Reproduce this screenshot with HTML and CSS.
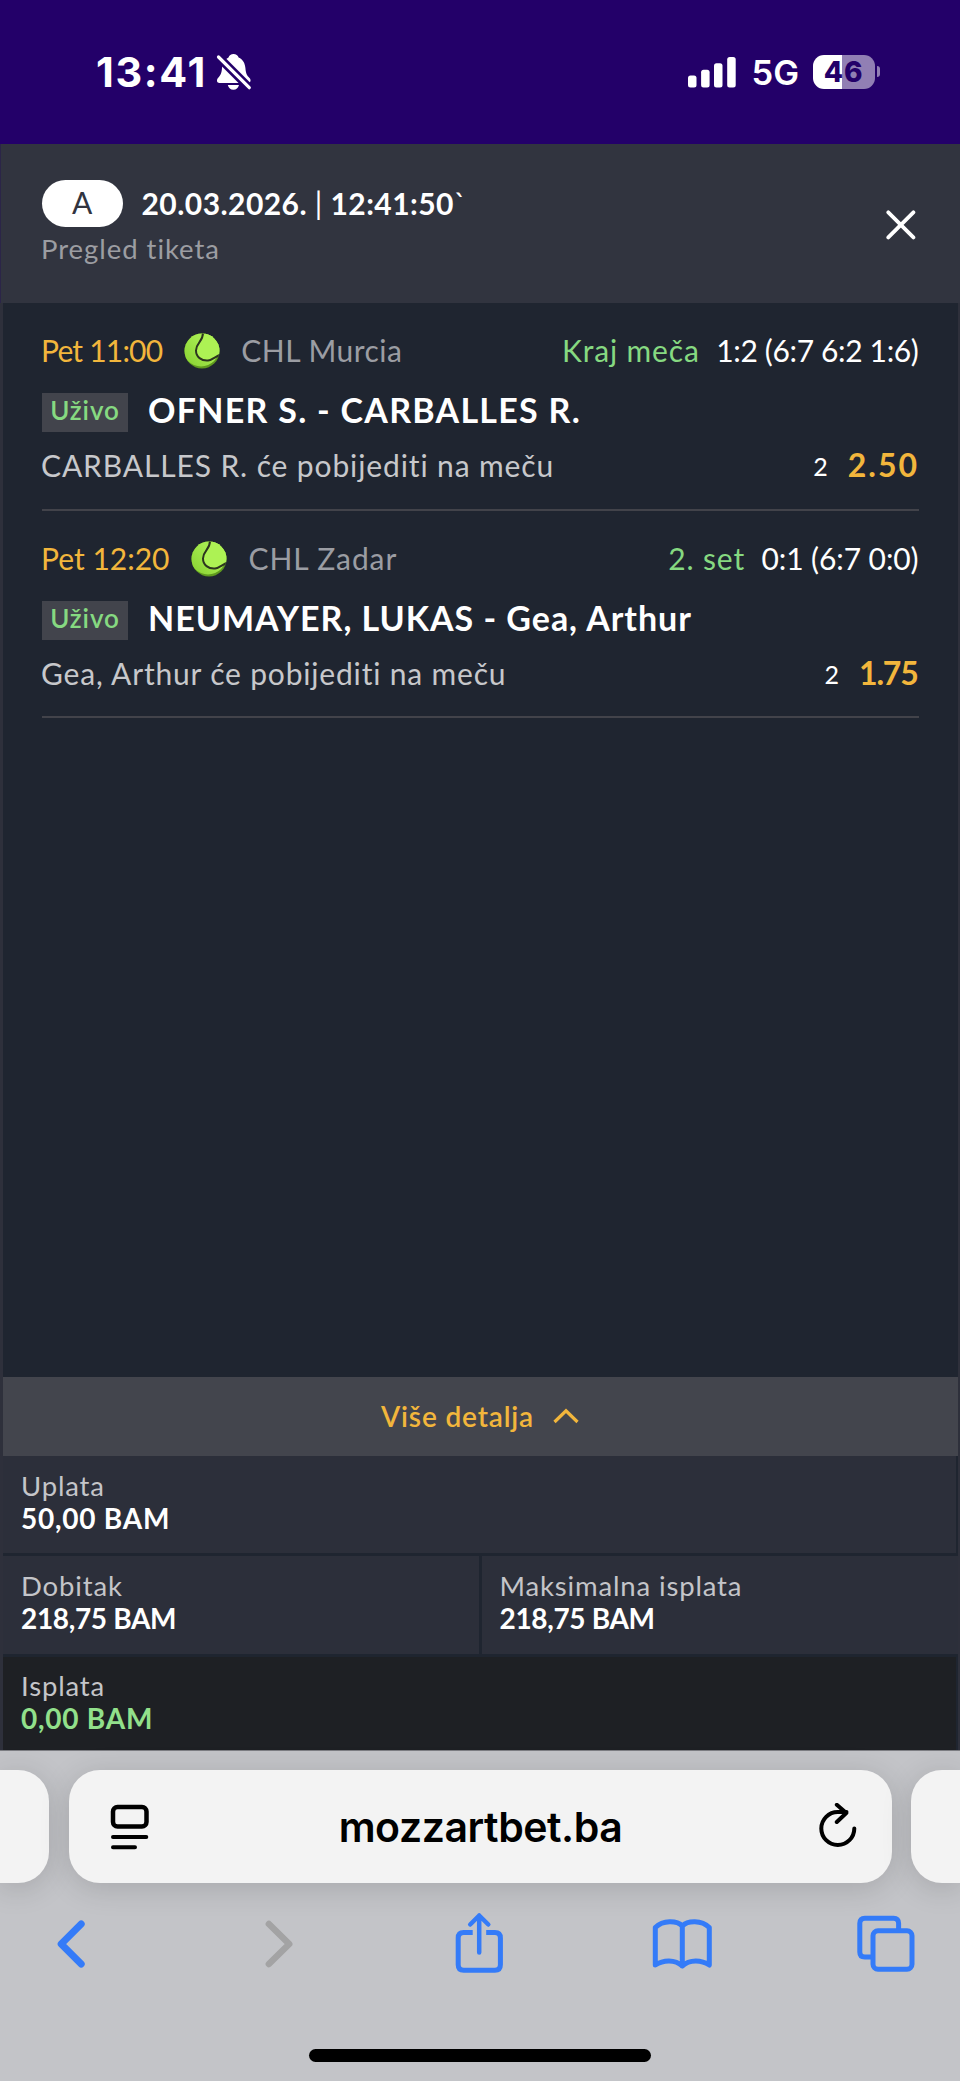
FILE: index.html
```html
<!DOCTYPE html>
<html lang="bs">
<head>
<meta charset="utf-8">
<title>Pregled tiketa</title>
<link rel="stylesheet" href="styles.css">
</head>
<body>
<div class="phone">
  <div class="status">
    <div class="status-left">
      <span class="clock">13:41</span>
      <svg class="bell" width="36" height="38" viewBox="0 0 36 38">
        <path fill="#fff" d="M17.5 1C20 1 22 2.400 22.600 4.400 27 6.500 29 10 29.400 15 29.800 20.500 31 22.500 33.500 25 35.500 27.200 34.500 30 32 30H3.500C.8 30 .2 27 2 25 4.500 22.300 5.600 20.500 6 15 6.400 10 8.500 6.500 12.500 4.400 13.200 2.400 15 1 17.500 1ZM11.800 32H23C22.200 35.200 20.200 36.800 17.400 36.800 14.600 36.800 12.600 35.200 11.800 32Z"/>
        <path stroke="#230069" stroke-width="8.500" d="M-1 .5 36 37.500"/>
        <path stroke="#fff" stroke-width="3.200" stroke-linecap="round" d="M2.500 4 33.300 34.700"/>
      </svg>
    </div>
    <div class="status-right">
      <svg width="48" height="31" viewBox="0 0 48 31" fill="#fff">
        <rect x="0" y="18.500" width="8.500" height="12" rx="2.500"/>
        <rect x="13.100" y="12.700" width="8.500" height="17.800" rx="2.500"/>
        <rect x="26" y="6.300" width="8.500" height="24.200" rx="2.500"/>
        <rect x="39.200" y="0" width="8.500" height="30.500" rx="2.500"/>
      </svg>
      <span class="network">5G</span>
      <span class="battery">46</span>
      <span class="battery-tip"></span>
    </div>
  </div>

  <header class="head">
    <div>
      <div class="head-row">
        <span class="pill">A</span>
        <span class="stamp">20.03.2026. <span class="bar">|</span> 12:41:50<span class="bar">`</span></span>
      </div>
      <div class="subtitle">Pregled tiketa</div>
    </div>
    <svg class="close" width="30" height="30" viewBox="0 0 30 30" fill="none" stroke="#fff" stroke-width="3.800" stroke-linecap="round"><path d="M2.300 2.300 27.400 27.400M27.400 2.300 2.300 27.400"/></svg>
  </header>

  <main class="frame">
    <section class="list">
      <article class="bet">
        <div class="meta">
          <span class="time time-tight">Pet 11:00</span>
          <svg class="ball" width="36" height="36" viewBox="0 0 36 36">
            <defs>
              <linearGradient id="felt" x1="0" y1="1" x2="1" y2="0"><stop offset="0" stop-color="#86cf2f"/><stop offset=".6" stop-color="#a6ec50"/></linearGradient>
              <clipPath id="disc"><circle cx="18" cy="18" r="17.500"/></clipPath>
            </defs>
            <g clip-path="url(#disc)">
              <rect width="36" height="36" fill="#5f9a1e"/>
              <circle cx="17" cy="15" r="18.500" fill="url(#felt)"/>
              <path d="M19 0C19 9 12 9.500 12 17.500 12 24 17.500 28 24 27.500 29 27 32 23 37 21.500V0Z" fill="#adf254" stroke="#2c351f" stroke-width="2"/>
            </g>
          </svg>
          <span class="league">CHL Murcia</span>
          <span class="phase">Kraj meča</span>
          <span class="score">1:2 (6:7 6:2 1:6)</span>
        </div>
        <div class="match"><span class="live">Uživo</span><span class="teams">OFNER S. - CARBALLES R.</span></div>
        <div class="pick"><span class="tip">CARBALLES R. će pobijediti na meču</span><span class="sign">2</span><span class="odds">2.50</span></div>
      </article>
      <article class="bet">
        <div class="meta">
          <span class="time">Pet 12:20</span>
          <svg class="ball" width="36" height="36" viewBox="0 0 36 36">
            <g clip-path="url(#disc)">
              <rect width="36" height="36" fill="#5f9a1e"/>
              <circle cx="17" cy="15" r="18.500" fill="url(#felt)"/>
              <path d="M19 0C19 9 12 9.500 12 17.500 12 24 17.500 28 24 27.500 29 27 32 23 37 21.500V0Z" fill="#adf254" stroke="#2c351f" stroke-width="2"/>
            </g>
          </svg>
          <span class="league league-wide">CHL Zadar</span>
          <span class="phase">2. set</span>
          <span class="score score-short">0:1 (6:7 0:0)</span>
        </div>
        <div class="match"><span class="live">Uživo</span><span class="teams teams-mixed">NEUMAYER, LUKAS - Gea, Arthur</span></div>
        <div class="pick"><span class="tip tip-mixed">Gea, Arthur će pobijediti na meču</span><span class="sign">2</span><span class="odds odds-tight">1.75</span></div>
      </article>
    </section>

    <div class="more">
      <span>Više detalja</span>
      <svg width="26" height="16" viewBox="0 0 26 16" fill="none" stroke="#f2b63c" stroke-width="3.200"><path d="M1.500 14 13 2.800 24.500 14"/></svg>
    </div>

    <section class="totals">
      <div class="cell wide"><div class="label">Uplata</div><div class="value">50,00 BAM</div></div>
      <div class="cell"><div class="label">Dobitak</div><div class="value value-tight">218,75 BAM</div></div>
      <div class="cell"><div class="label">Maksimalna isplata</div><div class="value value-tight">218,75 BAM</div></div>
      <div class="cell wide payout"><div class="label">Isplata</div><div class="value">0,00 BAM</div></div>
    </section>
  </main>

  <footer class="browser">
    <div class="tabs">
      <div class="tab side"></div>
      <div class="tab address">
        <svg width="40" height="48" viewBox="0 0 40 48" fill="none" stroke="#000" stroke-width="4.500" stroke-linecap="round"><rect x="3" y="4" width="33.500" height="19.500" rx="4.500"/><path stroke-width="4" d="M3 34H36.300M3 44.300H25"/></svg>
        <span class="host">mozzartbet.ba</span>
        <svg width="40" height="48" viewBox="0 0 40 48" fill="none" stroke="#000" stroke-width="4" stroke-linecap="round" stroke-linejoin="round"><path d="M36.300 25.500A16.500 16.500 0 1 1 19.800 9H28.500M18.800 1.800 28.300 10 18.800 19"/></svg>
      </div>
      <div class="tab side"></div>
    </div>
    <nav class="tools">
      <svg width="80" height="80" viewBox="0 0 80 80"><path stroke-width="7" d="M50.200 20 30.200 40 50.200 60"/></svg>
      <svg class="off" width="80" height="80" viewBox="0 0 80 80"><path stroke-width="6.500" d="M34.900 20 55.200 40 34.900 60"/></svg>
      <svg width="80" height="80" viewBox="0 0 80 80"><path stroke-linecap="butt" d="M34.700 28.500H25.700Q20.200 28.500 20.200 34V60.800Q20.200 66.300 25.700 66.300H56.900Q62.400 66.300 62.400 60.800V34Q62.400 28.500 56.900 28.500H48.200"/><path stroke-width="4.500" d="M41.200 48.500V11.500M32.200 20.500 41.200 11.500 50.300 20.500"/></svg>
      <svg width="80" height="80" viewBox="0 0 80 80"><path d="M40.300 22C35 16.300 21 15.800 13.300 23.500V61C21 55.800 33 55 40.300 62 47.600 55 59.600 55.800 67.300 61V23.500C59.600 15.800 45.600 16.300 40.300 22V62"/></svg>
      <svg width="80" height="80" viewBox="0 0 80 80"><path stroke-linecap="butt" d="M52.600 26.800V19.300Q52.600 14.300 47.600 14.300H18.800Q13.800 14.300 13.800 19.300V48Q13.800 53 18.800 53H27"/><rect x="27" y="26.800" width="39" height="38.500" rx="5"/></svg>
    </nav>
    <div class="home"></div>
  </footer>
</div>
</body>
</html>
```
FILE: styles.css
```css
* { box-sizing: border-box; }

body {
  margin: 0;
  background: #230069;
  font-family: Lato, "Open Sans", sans-serif;
  white-space: nowrap;
}

svg { display: block; flex: none; }

.phone {
  width: 960px;
  height: 2081px;
  display: flex;
  flex-direction: column;
  overflow: hidden;
}

/* status bar */
.status {
  height: 144px;
  flex: none;
  display: flex;
  justify-content: space-between;
  align-items: center;
  padding: 0 80px 0 96px;
  background: #230069;
  color: #fff;
  font-family: Inter, sans-serif;
}
.status-left, .status-right { display: flex; align-items: center; }
.clock { font-size: 41.3px; font-weight: 700; letter-spacing: 1.7px; }
.bell { margin: -1px 0 0 9.5px; }
.network { font-size: 34.5px; font-weight: 600; margin: 1px 0 0 15px; }
.battery {
  width: 61.5px;
  height: 34px;
  margin: -1px 0 0 14px;
  border-radius: 11px;
  background: linear-gradient(90deg, #fff 28.5px, #917fb4 28.5px);
  color: #230069;
  font-size: 28px;
  font-weight: 800;
  line-height: 34px;
  letter-spacing: 1px;
  text-align: center;
}
.battery-tip {
  width: 3.5px;
  height: 11px;
  margin: -1px 0 0 2px;
  border-radius: 0 4px 4px 0;
  background: #917fb4;
}

/* ticket header */
.head {
  height: 159px;
  flex: none;
  display: flex;
  justify-content: space-between;
  padding: 36.5px 44px 0 41px;
  border-left: 1px solid #2b2548;
  background: #31343f;
}
.head-row { display: flex; align-items: center; height: 46px; }
.pill {
  width: 80.5px;
  height: 46.500px;
  border-radius: 24px;
  background: #fff;
  color: #31343f;
  font-size: 30px;
  line-height: 44px;
  text-align: center;
}
.stamp {
  margin-left: 19px;
  color: #fff;
  font-size: 30px;
  font-weight: 700;
  line-height: 44px;
  letter-spacing: .45px;
  padding-bottom: 2px;
}
.bar { font-weight: 400; }
.subtitle {
  margin-left: -1px;
  padding-top: 3px;
  color: #9c9da2;
  font-size: 27.5px;
  line-height: 38px;
  letter-spacing: .95px;
}
.close { margin-top: 29.5px; }

/* ticket body */
.frame {
  height: 1447px;
  flex: none;
  display: flex;
  flex-direction: column;
  border: solid #2e303b;
  border-width: 0 2px 0 3px;
  background: #1f2530;
}
.list { flex: 1; padding: 0 39px; }
.bet {
  height: 207.67px;
  padding-top: 29px;
  border-bottom: 2px solid #42434a;
}
.meta { display: flex; height: 36px; font-size: 30px; line-height: 36px; }
.time { color: #f2b63c; margin-left: -1px; }
.time-tight { letter-spacing: -.8px; }
.ball { margin: 1px 0 0 21.5px; }
.league { margin-left: 21.5px; color: #9b9da3; letter-spacing: .5px; }
.league-wide { letter-spacing: .9px; }
.phase { margin-left: auto; color: #86d981; letter-spacing: .85px; }
.score { margin: 0 .5px 0 16.5px; color: #fff; letter-spacing: -.35px; }
.score-short { letter-spacing: -.1px; }
.match { display: flex; height: 39px; margin-top: 25px; line-height: 34px; }
.live {
  width: 86px;
  background: #42444c;
  color: #86d981;
  font-size: 26px;
  font-weight: 600;
  letter-spacing: .9px;
  text-align: center;
}
.teams {
  margin-left: 20px;
  color: #fff;
  font-size: 34px;
  font-weight: 700;
  letter-spacing: 1.27px;
}
.teams-mixed { letter-spacing: .97px; }
.pick { display: flex; margin-top: 15px; line-height: 36px; }
.tip { color: #c7c8cb; font-size: 30px; letter-spacing: .88px; margin-left: -1px; }
.tip-mixed { letter-spacing: .82px; }
.sign { margin-left: auto; padding-top: 1px; color: #fff; font-size: 25px; }
.odds { margin-left: 20px; color: #f2b63c; font-size: 32px; font-weight: 700; letter-spacing: 2px; }
.odds-tight { letter-spacing: -1.2px; padding-right: 1.5px; }

.more {
  height: 79px;
  display: flex;
  justify-content: center;
  align-items: center;
  gap: 19px;
  padding: 0 1px 2px 0;
  background: #43454d;
  color: #f2b63c;
  font-size: 28px;
  font-weight: 600;
  letter-spacing: .85px;
}

.totals { display: grid; grid-template-columns: 476px 1fr; gap: 3px 2.5px; }
.cell { height: 97.330px; padding: 14px 0 0 18px; background: #2c2f3a; }
.wide { grid-column: 1 / -1; margin-right: 2px; }
.payout { height: 93.340px; padding-top: 13.500px; background: #1e2024; }
.label { color: #c4c5c9; font-size: 27.5px; line-height: 32px; letter-spacing: .85px; }
.value { color: #fff; font-size: 28px; font-weight: 700; line-height: 32px; letter-spacing: .75px; }
.value-tight { letter-spacing: -.34px; }
.payout .value { color: #92e08b; }

/* browser controls */
.browser {
  flex: 1;
  border-top: 1px solid #7d7e83;
  background: #c3c4c8;
}
.tabs { display: flex; justify-content: space-between; padding-top: 19px; }
.tab {
  height: 113px;
  background: #f3f3f3;
  border-radius: 31px;
  box-shadow: 0 5px 30px rgba(0, 0, 0, .15);
}
.side { width: 49px; }
.side:first-child { border-radius: 0 31px 31px 0; }
.side:last-child { border-radius: 31px 0 0 31px; }
.address {
  width: 823px;
  display: flex;
  justify-content: space-between;
  align-items: center;
  padding: 0 34px 0 41px;
}
.host {
  margin: 1px 6px 0 0;
  font-family: Inter, sans-serif;
  font-size: 41px;
  font-weight: 600;
  letter-spacing: -.45px;
  color: #000;
}
.tools { display: flex; justify-content: space-between; padding: 21px 34px 0 30.500px; }
.tools svg {
  fill: none;
  stroke: #347bf8;
  stroke-width: 5;
  stroke-linecap: round;
  stroke-linejoin: round;
}
.tools .off { stroke: #a3a3a4; }
.home { width: 342px; height: 12.500px; margin: 65px auto 0; border-radius: 7px; background: #000; }
```
